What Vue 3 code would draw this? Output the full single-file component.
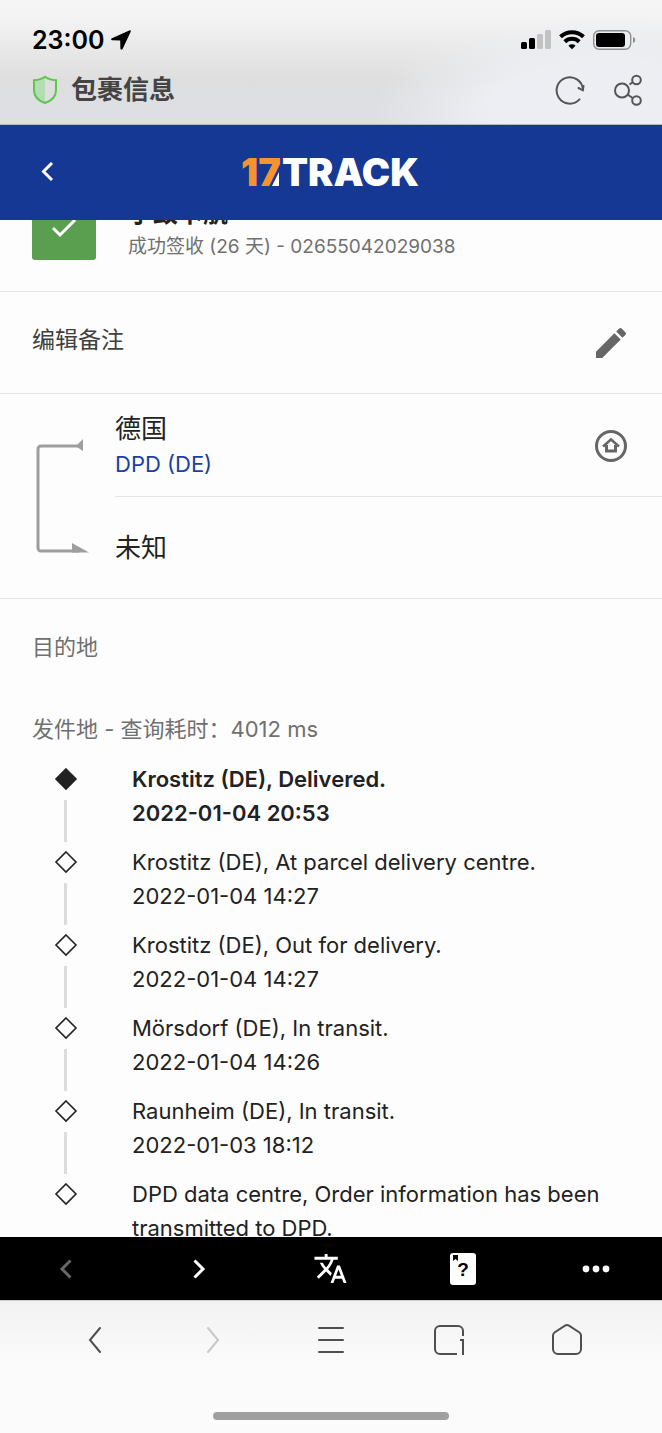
<template>
    <div class="app">

        <header class="browser-top">
            <div class="status-bar">
                <span class="time">23:00</span>
                <svg class="location" width="20" height="20" viewBox="0 0 20 20">
                    <path d="M18.300.4.9 8.200c-1.200.6-1 2 .3 2.100l8 .2.200 8c.1 1.300 1.600 1.600 2.200.4L19.700 1.800c.4-.9-.4-1.800-1.400-1.400z"/>
                </svg>
                <div class="status-icons">
                    <svg width="30" height="20" viewBox="0 0 30 20">
                        <rect x="0" y="12" width="6" height="7" rx="1.500"/>
                        <rect x="8" y="8" width="6" height="11" rx="1.500"/>
                        <rect x="16" y="4" width="6" height="15" rx="1.500" fill="#c2c2c2"/>
                        <rect x="24" y="0" width="6" height="19" rx="1.500" fill="#c2c2c2"/>
                    </svg>
                    <svg width="26" height="20" viewBox="0 0 26 20">
                        <g fill="none" stroke="#000" stroke-width="4">
                            <path d="M1.500 6.800a16.500 16.500 0 0 1 23 0"/>
                            <path d="M5.800 11.700a10.400 10.400 0 0 1 14.400 0"/>
                        </g>
                        <path d="M9.400 15.700a5.200 5.200 0 0 1 7.200 0L13 19.200z"/>
                    </svg>
                    <svg width="43" height="20" viewBox="0 0 43 20">
                        <rect x=".7" y=".7" width="37" height="18.600" rx="5.500" fill="none" stroke="#8e8e8e" stroke-width="1.400"/>
                        <rect x="3" y="3" width="29" height="14" rx="3"/>
                        <path d="M40 7c3 1 3 5 0 6z" fill="#8e8e8e"/>
                    </svg>
                </div>
            </div>
            <div class="title-bar">
                <svg width="26" height="30" viewBox="0 0 26 30">
                    <path d="M13 2 2 6v9c0 7 5 11 11 13z" fill="#b5ddb4"/>
                    <path d="M13 1.800C10 4 6 5 2 5.300V15c0 7 5 11 11 13 6-2 11-6 11-13V5.300C20 5 16 4 13 1.800z" fill="none" stroke="#5ec54d" stroke-width="2"/>
                </svg>
                <h1>包裹信息</h1>
                <button type="button" aria-label="刷新">
                    <svg width="30" height="30" viewBox="0 0 30 30" fill="none" stroke="#555" stroke-width="2" stroke-linecap="round">
                        <path d="M24.500 24.400A13.200 13.200 0 1 1 28 14.800"/>
                        <path d="m23.500 13 4.300 2.300L28.500 11"/>
                    </svg>
                </button>
                <button type="button" aria-label="分享">
                    <svg width="30" height="32" viewBox="0 0 30 32" fill="none" stroke="#555" stroke-width="2">
                        <circle cx="9" cy="16.500" r="7"/>
                        <circle cx="23.500" cy="6" r="4.300"/>
                        <circle cx="23.500" cy="26.500" r="4.300"/>
                        <path d="m16.500 10.500 3.500-2.500M14.500 20.500l5.500 3.800"/>
                    </svg>
                </button>
            </div>
        </header>

        <div class="site-header">
            <button type="button" aria-label="返回">
                <svg width="16" height="22" viewBox="0 0 16 22" fill="none" stroke="#fff" stroke-width="3">
                    <path d="m12 1-8.500 8.500L12 18"/>
                </svg>
            </button>
            <a class="logo" href="#" aria-label="17TRACK">
                <svg width="184" height="54" viewBox="0 0 184 54">
                    <text class="logo-text" x="2" y="40" fill="#f59331">17</text>
                    <path d="m33 40 7-14v14z" fill="#fff"/>
                    <text class="logo-text" x="43" y="40" fill="#fff">TRACK</text>
                </svg>
            </a>
        </div>

        <main class="content">
            <section class="summary">
                <span class="state">
                    <svg width="26" height="20" viewBox="0 0 26 20" fill="none" stroke="#fff" stroke-width="3">
                        <path d="m2 10 7 7L24 2"/>
                    </svg>
                </span>
                <div>
                    <h2>宁致卡航</h2>
                    <p>成功签收 (26 天) - 02655042029038</p>
                </div>
            </section>

            <section class="note">
                <span>编辑备注</span>
                <button type="button" aria-label="编辑备注">
                    <svg width="40" height="40" viewBox="0 0 24 24" fill="#666">
                        <path d="M3 17.250V21h3.750L17.810 9.940l-3.750-3.750L3 17.250zM20.710 7.040a1 1 0 0 0 0-1.410l-2.340-2.340a1 1 0 0 0-1.410 0l-1.830 1.830 3.750 3.750 1.830-1.830z"/>
                    </svg>
                </button>
            </section>

            <section class="route">
                <svg class="route-arrow" width="56" height="118" viewBox="0 0 56 118">
                    <path d="M44 9H6a3 3 0 0 0-3 3v99a3 3 0 0 0 3 3h38" fill="none" stroke="#9e9e9e" stroke-width="3"/>
                    <path d="m42 8 6-6v12l-6-4zM37 106l17 9.500H37z" fill="#9e9e9e"/>
                </svg>
                <div class="places">
                    <div class="place origin">
                        <div>
                            <h3>德国</h3>
                            <a href="#">DPD (DE)</a>
                        </div>
                        <button type="button" aria-label="官网">
                            <svg width="34" height="34" viewBox="0 0 34 34" fill="none" stroke="#666">
                                <circle cx="17" cy="17" r="14.500" stroke-width="3"/>
                                <path d="M12.500 16v6h9v-6" stroke-width="3"/>
                                <path d="m9 17.500 8-7 8 7" stroke-width="2.500"/>
                            </svg>
                        </button>
                    </div>
                    <div class="place">
                        <h3>未知</h3>
                    </div>
                </div>
            </section>

            <section class="tracking">
                <h4>目的地</h4>
                <h4>发件地 - 查询耗时：4012 ms</h4>
                <ol>
                    <li v-for="(event,index) in events" :key="index" :class="{ latest: index === 0 }">
                        <div class="marker">
                            <svg width="24" height="24" viewBox="0 0 24 24">
                                <path d="m12 2 10 10-10 10L2 12z"/>
                            </svg>
                            <span v-if="index < events.length - 1" class="line"></span>
                        </div>
                        <div class="event">
                            <p>{{ event.text }}</p>
                            <time v-if="event.time">{{ event.time }}</time>
                        </div>
                    </li>
                </ol>
            </section>
        </main>

        <nav class="site-nav">
            <button type="button" aria-label="上一个" disabled>
                <svg width="16" height="22" viewBox="0 0 16 22" fill="none" stroke="#666" stroke-width="3">
                    <path d="m12.500 2.500-8.500 8.500 8.500 8.500"/>
                </svg>
            </button>
            <button type="button" aria-label="下一个">
                <svg width="16" height="22" viewBox="0 0 16 22" fill="none" stroke="#fff" stroke-width="3">
                    <path d="m3.500 2.500 8.500 8.500-8.500 8.500"/>
                </svg>
            </button>
            <button type="button" aria-label="翻译">
                <svg width="35" height="35" viewBox="0 0 24 24" fill="#fff">
                    <path d="M12.870 15.070l-2.540-2.510.030-.030c1.740-1.940 2.980-4.170 3.710-6.530H17V4h-7V2H8v2H1v1.990h11.170C11.500 7.920 10.440 9.750 9 11.350 8.070 10.320 7.300 9.190 6.690 8h-2c.73 1.630 1.730 3.170 2.980 4.560l-5.090 5.020L4 19l5-5 3.110 3.110.76-2.040zM18.500 10h-2L12 22h2l1.120-3h4.750L21 22h2l-4.500-12zm-2.620 7l1.620-4.330L19.120 17h-3.240z"/>
                </svg>
            </button>
            <button type="button" aria-label="帮助">
                <svg width="26" height="32" viewBox="0 0 26 32">
                    <rect width="26" height="32" rx="3" fill="#fff"/>
                    <path d="M3 2h5v6L5.500 6 3 8z"/>
                    <text class="help-text" x="13" y="23" text-anchor="middle">?</text>
                </svg>
            </button>
            <button type="button" aria-label="更多">
                <svg width="28" height="8" viewBox="0 0 28 8" fill="#fff">
                    <circle cx="4" cy="4" r="3.400"/>
                    <circle cx="14" cy="4" r="3.400"/>
                    <circle cx="24" cy="4" r="3.400"/>
                </svg>
            </button>
        </nav>

        <footer class="browser-bottom">
            <nav class="browser-nav">
                <button type="button" aria-label="后退">
                    <svg width="14" height="28" viewBox="0 0 14 28" fill="none" stroke="#4f4f4f" stroke-width="2" stroke-linecap="round">
                        <path d="M12 2 2 14l10 12"/>
                    </svg>
                </button>
                <button type="button" aria-label="前进" disabled>
                    <svg width="14" height="28" viewBox="0 0 14 28" fill="none" stroke="#c8c8c8" stroke-width="2" stroke-linecap="round">
                        <path d="m2 2 10 12L2 26"/>
                    </svg>
                </button>
                <button type="button" aria-label="菜单">
                    <svg width="28" height="28" viewBox="0 0 28 28" fill="none" stroke="#4f4f4f" stroke-width="2" stroke-linecap="round">
                        <path d="M2 2h24M2 14h24M2 26h24"/>
                    </svg>
                </button>
                <button type="button" aria-label="窗口 1">
                    <svg width="30" height="30" viewBox="0 0 30 30" fill="none" stroke="#4f4f4f" stroke-width="2">
                        <path d="M23 29H6a5 5 0 0 1-5-5V6a5 5 0 0 1 5-5h18a5 5 0 0 1 5 5v5"/>
                        <path d="M26 15h3v15"/>
                    </svg>
                </button>
                <button type="button" aria-label="主页">
                    <svg width="32" height="32" viewBox="0 0 32 32" fill="none" stroke="#4f4f4f" stroke-width="2">
                        <path d="M14 1.600 3.500 8.500A4 4 0 0 0 2 11.500V25a5 5 0 0 0 5 5h18a5 5 0 0 0 5-5V11.500a4 4 0 0 0-1.500-3L18 1.600a4 4 0 0 0-4 0z"/>
                    </svg>
                </button>
            </nav>
            <div class="home-indicator"></div>
        </footer>

    </div>
</template>

<script setup>
    const events = [
        { text: 'Krostitz (DE), Delivered.', time: '2022-01-04 20:53' },
        { text: 'Krostitz (DE), At parcel delivery centre.', time: '2022-01-04 14:27' },
        { text: 'Krostitz (DE), Out for delivery.', time: '2022-01-04 14:27' },
        { text: 'Mörsdorf (DE), In transit.', time: '2022-01-04 14:26' },
        { text: 'Raunheim (DE), In transit.', time: '2022-01-03 18:12' },
        { text: 'DPD data centre, Order information has been transmitted to DPD.', time: '' }
    ]
</script>

<style>
    body{
        margin: 0;
        background-color: #fdfdfd;
    }
</style>

<style scoped>
    .app{
        height: 100vh;
        display: flex;
        flex-direction: column;
        font-family: Inter, "Noto Sans CJK SC", sans-serif;
        font-size: 22px;
        color: #222;
    }

    h1, h2, h3, h4, ol, p{
        margin: 0;
        padding: 0;
    }

    h3, h4{
        font-weight: 400;
    }

    a{
        text-decoration: none;
    }

    button{
        display: flex;
        align-items: center;
        justify-content: center;
        padding: 0;
        border: none;
        background: none;
        cursor: pointer;
    }

    svg{
        display: block;
        flex-shrink: 0;
    }

    .browser-top{
        padding-top: 24px;
        border-bottom: 1px solid #b4bac8;
        background: radial-gradient(ellipse 36% 80% at 92% 90%, rgba(238,240,245,0.9) 50%, rgba(238,240,245,0) 100%),
            linear-gradient(#f5f5f5 10%, #dedede 65%, #dcdfe5);
    }

    .status-bar{
        height: 32px;
        padding: 0 26px 0 32px;
        display: flex;
        align-items: center;
        gap: 7px;
    }

    .time{
        font-size: 25px;
        font-weight: 600;
        color: #000;
    }

    .status-icons{
        margin-left: auto;
        display: flex;
        gap: 8px;
    }

    .title-bar{
        height: 68px;
        padding: 0 19px 0 32px;
        display: flex;
        align-items: center;
        gap: 13px;
    }

    .title-bar h1{
        flex: 1;
        font-size: 26px;
        font-weight: 600;
        line-height: 32px;
        color: #444;
    }

    .title-bar button + button{
        margin-left: 15px;
    }

    .site-header{
        height: 95px;
        flex-shrink: 0;
        display: grid;
        grid-template-columns: 1fr auto 1fr;
        align-items: center;
        background-color: #143893;
        z-index: 1;
    }

    .site-header button{
        justify-self: start;
        margin-left: 40px;
    }

    .logo-text{
        font-size: 38px;
        font-weight: 900;
    }

    .content{
        flex: 1;
        min-height: 0;
        overflow: hidden;
    }

    /* title row is scrolled half way under the site header */
    .summary{
        margin-top: -56px;
        padding: 32px 32px 31px;
        display: flex;
        gap: 32px;
        border-bottom: 1px solid #e4e4e4;
    }

    .state{
        width: 64px;
        height: 64px;
        display: flex;
        align-items: center;
        justify-content: center;
        border-radius: 3px;
        background-color: #5a9e50;
    }

    .summary h2{
        font-size: 25px;
        font-weight: 600;
        line-height: 34px;
    }

    .summary p{
        font-size: 19px;
        line-height: 34px;
        height: 30px;
        color: #707070;
    }

    .note{
        height: 70px;
        padding: 31px 31px 0 32px;
        display: flex;
        align-items: flex-start;
        justify-content: space-between;
        border-bottom: 1px solid #e4e4e4;
        font-size: 23px;
        line-height: 34px;
        color: #404040;
    }

    .route{
        padding-left: 35px;
        display: flex;
        align-items: center;
        gap: 24px;
        border-bottom: 1px solid #e4e4e4;
    }

    .places{
        flex: 1;
    }

    .place{
        height: 101px;
        padding-right: 34px;
        display: flex;
        align-items: center;
        justify-content: space-between;
    }

    .origin{
        height: 100px;
        padding-top: 2px;
        border-bottom: 1px solid #e4e4e4;
    }

    .place h3{
        font-size: 26px;
        line-height: 36px;
    }

    .place a{
        display: block;
        line-height: 34px;
        color: #1b3fa6;
    }

    .tracking{
        padding: 15px 32px 0;
    }

    .tracking h4{
        margin-bottom: 16px;
        line-height: 66px;
        color: #707070;
    }

    .tracking h4 + h4{
        margin-bottom: 0;
    }

    ol{
        list-style: none;
    }

    li{
        display: grid;
        grid-template-columns: 67px 1fr;
        column-gap: 33px;
        padding-bottom: 16px;
        line-height: 34px;
    }

    .marker{
        height: 67px;
        padding-top: 5px;
        box-sizing: border-box;
        display: flex;
        flex-direction: column;
        align-items: center;
        gap: 9px;
    }

    .marker path{
        fill: #fff;
        stroke: #222;
        stroke-width: 1.6;
    }

    .line{
        width: 3px;
        height: 42px;
        flex-shrink: 0;
        background-color: #dcdcdc;
    }

    .latest{
        font-weight: 600;
    }

    .latest .marker path{
        fill: #222;
    }

    .event{
        height: 67px;
    }

    .event time{
        display: block;
    }

    .site-nav{
        height: 63px;
        flex-shrink: 0;
        display: grid;
        grid-template-columns: repeat(5,1fr);
        background-color: #000;
    }

    .help-text{
        font-size: 19px;
        font-weight: 700;
    }

    .browser-bottom{
        border-top: 1px solid #c8c8c8;
        padding-bottom: 13px;
        background: linear-gradient(#f2f2f2, #fbfbfb 50%);
    }

    .browser-nav{
        height: 78px;
        padding: 0 36px;
        display: grid;
        grid-template-columns: repeat(5,1fr);
    }

    .home-indicator{
        width: 236px;
        height: 8px;
        margin: 33px auto 0;
        border-radius: 4px;
        background-color: #a0a0a0;
    }
</style>
